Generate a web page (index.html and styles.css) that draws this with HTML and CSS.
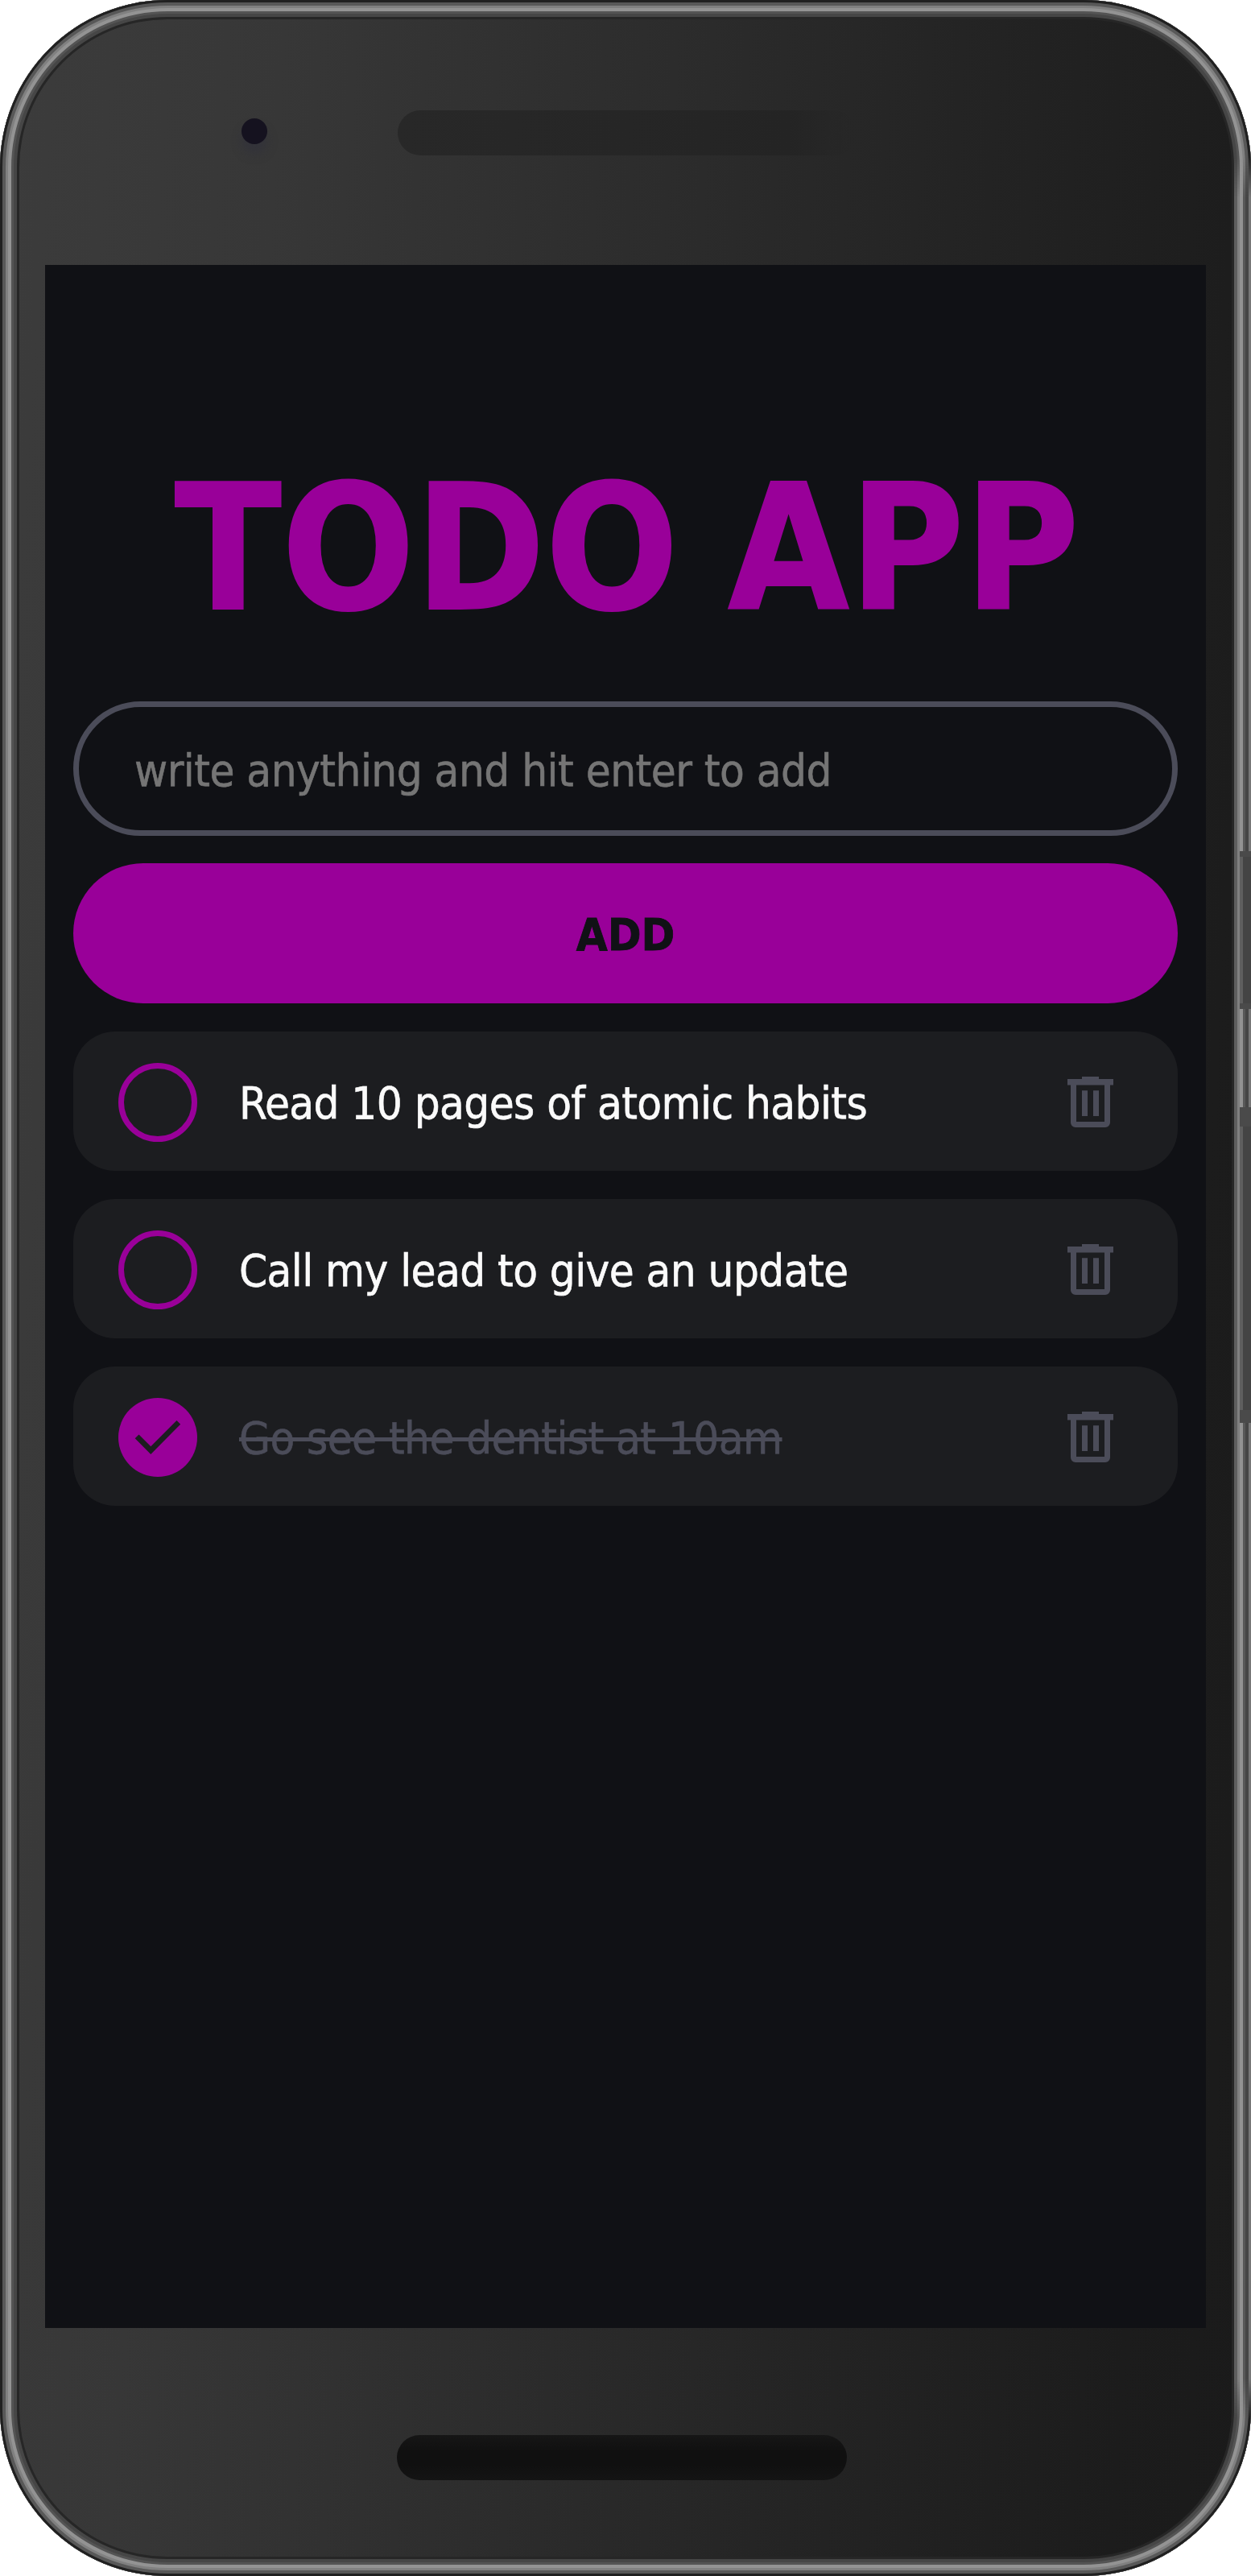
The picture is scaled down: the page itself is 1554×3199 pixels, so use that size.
FILE: index.html
```html
<!DOCTYPE html>
<html lang="en">
<head>
<meta charset="utf-8">
<title>Todo App</title>
<link rel="stylesheet" href="styles.css">
</head>
<body>
<svg class="sprite" aria-hidden="true">
  <symbol id="trash" viewBox="0 0 57 63">
    <path fill-rule="evenodd" d="M18 0h21v3h18v7.500h-4V57a6 6 0 0 1-6 6H10a6 6 0 0 1-6-6V10.500H0V3h18zM11 10.500V56h35V10.500zM18 17.300h7V49h-7zM32 17.300h7V49h-7z"/>
  </symbol>
</svg>
<div class="phone">
  <div class="bezel-top">
    <span class="camera"></span>
    <span class="speaker"></span>
  </div>
  <main class="screen">
    <h1 class="title"><span class="title-text">TODO APP</span></h1>
    <form class="form">
      <input class="field" type="text" placeholder="write anything and hit enter to add">
      <button class="add" type="button">ADD</button>
    </form>
    <ul class="list">
      <li class="item">
        <span class="check"></span>
        <span class="label">Read 10 pages of atomic habits</span>
        <svg class="trash"><use href="#trash"/></svg>
      </li>
      <li class="item">
        <span class="check"></span>
        <span class="label">Call my lead to give an update</span>
        <svg class="trash"><use href="#trash"/></svg>
      </li>
      <li class="item done">
        <span class="check"><svg class="tick" viewBox="0 0 98 98"><path d="M20.700 50.300L40.300 69.900L77.200 32.700L72.500 28L40.300 60.200L25.500 45.500z"/></svg></span>
        <span class="label">Go see the dentist at 10am</span>
        <svg class="trash"><use href="#trash"/></svg>
      </li>
    </ul>
  </main>
  <div class="bezel-bottom"><span class="slot"></span></div>
  <span class="rail"></span>
  <span class="key power"></span>
  <span class="key volume"></span>
</div>
</body>
</html>
```
FILE: styles.css
```css
* { box-sizing: border-box; }
body {
  margin: 0;
  background: #fff;
  font-family: "DejaVu Sans Condensed", "DejaVu Sans", sans-serif;
  font-stretch: condensed;
}
.sprite { display: none; }
.phone {
  position: relative;
  display: flex;
  flex-direction: column;
  width: 1554px;
  height: 3199px;
  padding: 0 56px;
  border-radius: 208px;
  background: linear-gradient(94deg, #3c3c3c 0%, #373737 20%, #2d2d2d 45%, #232323 70%, #1c1c1c 90%, #1a1a1a 100%);
  box-shadow:
    inset 0 0 0 3px #202020,
    inset 0 0 0 7px #585858,
    inset 0 0 0 10px #808080,
    inset 0 0 0 14px #939393,
    inset 0 0 0 17px #545454,
    inset 0 0 0 21px #464646,
    inset 0 0 0 24px #262626;
}
.bezel-top {
  display: flex;
  align-items: flex-start;
  height: 329px;
  padding: 137px 0 0 244px;
}
.camera {
  width: 32px;
  height: 32px;
  margin-top: 10px;
  border-radius: 50%;
  background: #15121f;
  box-shadow: 0 12px 12px #33333a;
}
.speaker {
  width: 570px;
  height: 56px;
  margin-left: 162px;
  border-radius: 28px;
  background: linear-gradient(90deg, #282828, #262626 50%, #242424 85%, rgba(36, 36, 36, 0));
}
.screen {
  width: 1442px;
  height: 2562px;
  padding: 0 35px;
  background: #101115;
}
.title {
  display: flex;
  justify-content: center;
  margin: 0;
  height: 542px;
  padding: 225px 0 0 4px;
  color: #990099;
  font-size: 216px;
  font-weight: 700;
  line-height: 256px;
  white-space: nowrap;
  word-spacing: -7px;
  letter-spacing: .5px;
  -webkit-text-stroke: 2px #990099;
}
.form, .list { display: flex; flex-direction: column; gap: 35px; }
.field {
  height: 167px;
  padding: 3px 69px 0;
  border: 7px solid #4b4c59;
  border-radius: 84px;
  background: transparent;
  color: #fff;
  font: inherit;
  font-size: 56px;
  letter-spacing: -.55px;
  -webkit-text-stroke: .6px;
}
.field::placeholder { color: #757575; opacity: 1; }
.add {
  height: 174px;
  padding: 2px 0 0;
  border: 0;
  border-radius: 87px;
  background: #990099;
  color: #101115;
  font: inherit;
  font-size: 56px;
  font-weight: 700;
  -webkit-text-stroke: .8px;
}
.form { gap: 34px; }
.list { margin: 35px 0 0; padding: 0; list-style: none; }
.item {
  display: flex;
  align-items: center;
  height: 173px;
  padding: 2px 80px 0 56px;
  border-radius: 52px;
  background: #1c1d20;
  color: #fafafa;
  font-size: 56px;
  white-space: nowrap;
}
.check {
  width: 98px;
  height: 98px;
  border: 7px solid #990099;
  border-radius: 50%;
}
.label {
  flex: 1;
  margin-left: 52px;
  padding-top: 2px;
  letter-spacing: -.6px;
  -webkit-text-stroke: .6px;
}
.trash { width: 57px; height: 63px; fill: #4b4c59; }
.done .check { border: 0; background: #990099; }
.done .label { color: #4b4c59; text-decoration: line-through; text-decoration-thickness: 5px; }
.tick { display: block; width: 98px; height: 98px; fill: #1c1d20; }
.bezel-bottom { padding: 133px 0 0 437px; }
.slot {
  display: block;
  width: 559px;
  height: 56px;
  border-radius: 28px;
  background: linear-gradient(#161616, #101010 35%, #101010 65%, #141414);
}
.rail {
  position: absolute;
  top: 195px;
  right: 0;
  bottom: 195px;
  width: 21px;
  background: linear-gradient(90deg, #5e5e5e 4px, #808080 4px 7px, #939393 7px 11px, #585858 11px 14px, #464646 14px 18px, #777 18px);
  mask-image: linear-gradient(transparent, #000 50px calc(100% - 50px), transparent);
}
.key {
  position: absolute;
  right: 0;
  width: 14px;
  border: solid #4a4a4a;
  border-width: 7px 0;
  background: linear-gradient(90deg, #5f5f5f 4px, #444 4px);
}
.power { top: 1057px; height: 196px; }
.volume { top: 1375px; height: 392px; border-top-width: 24px; border-bottom-width: 16px; }
```
